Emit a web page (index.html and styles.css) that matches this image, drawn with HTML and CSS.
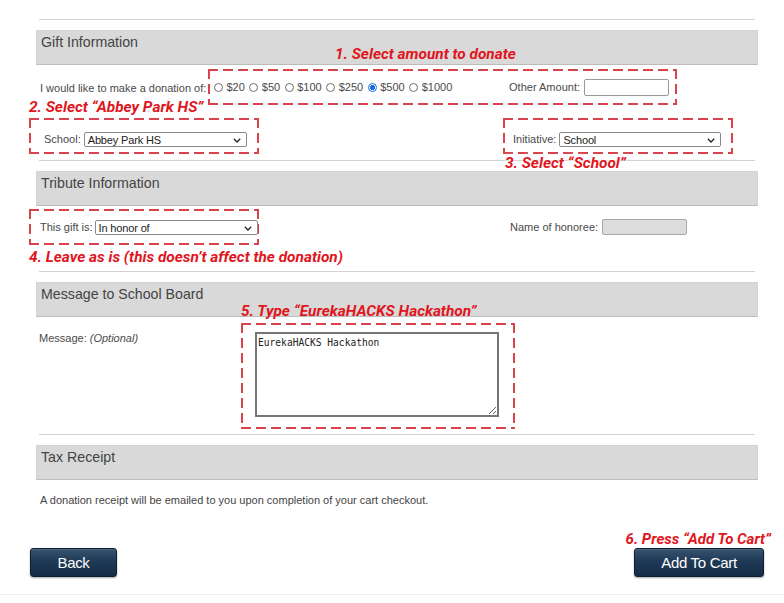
FILE: index.html
```html
<!DOCTYPE html>
<html lang="en">
<head>
<meta charset="utf-8">
<title>Donation</title>
<link rel="stylesheet" href="styles.css">
</head>
<body>
<div class="page">
  <div class="rule rule-first"></div>

  <h2 class="section-head">Gift Information</h2>
  <div class="row-amount">
    <span class="label label-amount">I would like to make a donation of:</span>
    <div class="dash dash-amount">
      <label class="radio"><input type="radio" name="amt"><span>$20</span></label>
      <label class="radio"><input type="radio" name="amt"><span>$50</span></label>
      <label class="radio"><input type="radio" name="amt"><span>$100</span></label>
      <label class="radio"><input type="radio" name="amt"><span>$250</span></label>
      <label class="radio"><input type="radio" name="amt" checked><span>$500</span></label>
      <label class="radio"><input type="radio" name="amt"><span>$1000</span></label>
      <span class="label other-label">Other Amount:</span>
      <input class="text-input" type="text">
    </div>
  </div>
  <div class="row-two row-school">
    <div class="dash dash-school">
      <span class="label">School:</span>
      <div class="select sel-school"><span>Abbey Park HS</span><svg width="8" height="5" viewBox="0 0 8 5"><path d="M0.8 0.8L4 4 7.2 0.8" stroke="#222" stroke-width="1.3" fill="none"/></svg></div>
    </div>
    <div class="dash dash-init">
      <span class="label">Initiative:</span>
      <div class="select sel-init"><span>School</span><svg width="8" height="5" viewBox="0 0 8 5"><path d="M0.8 0.8L4 4 7.2 0.8" stroke="#222" stroke-width="1.3" fill="none"/></svg></div>
    </div>
  </div>
  <div class="rule rule-a"></div>

  <h2 class="section-head">Tribute Information</h2>
  <div class="row-two row-tribute">
    <div class="dash dash-gift">
      <span class="label">This gift is:</span>
      <div class="select sel-gift"><span>In honor of</span><svg width="8" height="5" viewBox="0 0 8 5"><path d="M0.8 0.8L4 4 7.2 0.8" stroke="#222" stroke-width="1.3" fill="none"/></svg></div>
    </div>
    <div class="honoree">
      <span class="label">Name of honoree:</span>
      <input class="text-input input-disabled" type="text" disabled>
    </div>
  </div>
  <div class="rule rule-b"></div>

  <h2 class="section-head">Message to School Board</h2>
  <div class="row-message">
    <span class="label msg-label">Message: <em>(Optional)</em></span>
    <div class="dash dash-msg">
      <textarea class="msg-box">EurekaHACKS Hackathon</textarea>
    </div>
  </div>
  <div class="rule rule-c"></div>

  <h2 class="section-head">Tax Receipt</h2>
  <p class="receipt">A donation receipt will be emailed to you upon completion of your cart checkout.</p>

  <div class="actions">
    <button class="btn btn-back" type="button">Back</button>
    <button class="btn btn-add" type="button">Add To Cart</button>
  </div>
  <div class="bottom-line"></div>

  <span class="note note-1">1. Select amount to donate</span>
  <span class="note note-2">2. Select “Abbey Park HS”</span>
  <span class="note note-3">3. Select “School”</span>
  <span class="note note-4">4. Leave as is (this doesn’t affect the donation)</span>
  <span class="note note-5">5. Type “EurekaHACKS Hackathon”</span>
  <span class="note note-6">6. Press “Add To Cart”</span>
</div>
</body>
</html>
```

FILE: styles.css
```css
* { box-sizing: border-box; }

html, body {
  margin: 0;
  background: #fff;
}

body {
  font-family: "Liberation Sans", Arial, sans-serif;
  color: #4a4a4a;
}

.page {
  position: relative;
  width: 784px;
  height: 603px;
  padding: 19px 26px 0 36px;
  overflow: hidden;
}

.rule {
  height: 1px;
  margin: 0 3px;
  background: #d2d2d2;
}
.rule-a { margin-top: 6px; }
.rule-b { margin-top: 26px; }
.rule-c { margin-top: 5px; }

.section-head {
  height: 35px;
  margin: 10px 0 0;
  padding: 3px 4px 0;
  background: #d9d9d9;
  border: 1px solid #d3d3d3;
  border-bottom-color: #bdbdbd;
  font-size: 14.2px;
  font-weight: normal;
  line-height: 17px;
  color: #444;
}

.label {
  font-size: 11px;
  line-height: 13px;
  color: #4a4a4a;
  white-space: nowrap;
}

/* dashed annotation frames */
.dash {
  --dc: #d9434b;
  background:
    repeating-linear-gradient(90deg, var(--dc) 0 10px, transparent 10px 15px) top left / 100% 2px no-repeat,
    repeating-linear-gradient(90deg, var(--dc) 0 10px, transparent 10px 15px) bottom left / 100% 2px no-repeat,
    repeating-linear-gradient(180deg, var(--dc) 0 10px, transparent 10px 15px) top left / 2px 100% no-repeat,
    repeating-linear-gradient(180deg, var(--dc) 0 10px, transparent 10px 15px) top right / 2px 100% no-repeat;
}

/* amount row */
.row-amount {
  display: flex;
  align-items: center;
  margin-top: 4px;
  height: 36px;
}
.label-amount {
  width: 172px;
  padding-left: 4px;
  padding-top: 2px;
}
.dash-amount {
  display: flex;
  align-items: center;
  width: 469px;
  height: 36px;
  padding: 0 8px 0 6px;
}
.radio {
  display: flex;
  align-items: center;
  margin-right: 4.5px;
  font-size: 11px;
  color: #4a4a4a;
}
.radio input {
  -webkit-appearance: none;
  appearance: none;
  width: 9px;
  height: 9px;
  margin: 0 3.5px 0 0;
  border: 1px solid #6f6f6f;
  border-radius: 50%;
  background: #fff;
}
.radio input:checked {
  border-color: #1a6ee0;
  background: radial-gradient(circle, #1a6ee0 0 2.3px, #fff 2.8px);
}
.other-label { margin-left: auto; margin-right: 4px; }
.text-input {
  width: 85px;
  height: 17px;
  margin: 0;
  border: 1px solid #9a9a9a;
  border-radius: 2px;
  background: #fff;
  font: 11px "Liberation Sans", Arial, sans-serif;
}
.input-disabled {
  height: 16px;
  background: #dcdcdc;
  border-color: #a8a8a8;
}

/* two-column rows */
.row-two {
  display: grid;
  grid-template-columns: 474px 248px;
  align-items: center;
}
.row-school { margin-top: 13px; }
.row-tribute { margin-top: 3px; }

.dash-school, .dash-init, .dash-gift {
  display: flex;
  align-items: center;
  width: 230px;
  height: 36px;
  margin-left: -7px;
}
.dash-school { padding: 7px 0 0 15px; }
.dash-init { padding: 7px 0 0 10px; }
.dash-gift { padding: 1px 0 0 11px; }

.select {
  display: flex;
  align-items: center;
  justify-content: space-between;
  height: 15px;
  margin-left: 3px;
  padding: 1px 5px 0 3px;
  border: 1px solid #8a8a8a;
  border-radius: 2px;
  background: #fff;
  font-size: 11px;
  letter-spacing: -0.15px;
  color: #222;
}
.select svg { flex: none; }
.sel-school { width: 163px; }
.sel-init { width: 162px; }
.sel-gift { width: 163px; margin-left: 2px; }

.honoree {
  display: flex;
  align-items: center;
  gap: 4px;
}

/* message row */
.row-message {
  display: grid;
  grid-template-columns: 205px 274px;
  margin-top: 6px;
}
.msg-label {
  padding-left: 3px;
  padding-top: 9px;
}
.msg-label em { font-style: italic; }
.dash-msg {
  height: 106px;
  padding: 9px 14px 0 14px;
}
.msg-box {
  display: block;
  width: 244px;
  height: 85px;
  margin: 0;
  padding: 3px 1px;
  border: 2px solid #767676;
  font-family: "DejaVu Sans Mono", "Liberation Mono", monospace;
  font-size: 9.6px;
  line-height: 12px;
  color: #222;
  background: #fff;
}

/* tax receipt */
.receipt {
  margin: 14px 0 0 4px;
  font-size: 11px;
  line-height: 13px;
  color: #444;
}

.actions {
  display: flex;
  justify-content: space-between;
  margin: 41px -6px 0 -6px;
}
.btn {
  height: 29px;
  padding: 0;
  border: 1px solid #0d1f33;
  border-radius: 3px;
  background: linear-gradient(#36536f 0%, #1f3a57 45%, #142c46 100%);
  box-shadow: 0 1px 2px rgba(0, 0, 0, 0.35), inset 0 1px 0 rgba(255, 255, 255, 0.12);
  color: #fff;
  font: 15px/27px "Liberation Sans", Arial, sans-serif;
  letter-spacing: -0.3px;
}
.btn-back { width: 87px; }
.btn-add { width: 130px; }

.bottom-line {
  height: 1px;
  margin: 17px 0 0 -36px;
  width: 784px;
  background: #ececec;
}

/* red annotation captions */
.note {
  position: absolute;
  font-family: Roboto, "Liberation Sans", sans-serif;
  font-weight: 700;
  font-style: italic;
  font-size: 15.4px;
  line-height: 18px;
  color: #e0161e;
  white-space: nowrap;
}
.note-1 { top: 45px; left: 335px; }
.note-2 { top: 98px; left: 29px; }
.note-3 { top: 154px; left: 505px; text-shadow: 0 0 4px #fff, 0 0 6px #fff; }
.note-4 { top: 248px; left: 29px; }
.note-5 { top: 302px; left: 241px; }
.note-6 { top: 530px; right: 13px; font-size: 15px; }
```
